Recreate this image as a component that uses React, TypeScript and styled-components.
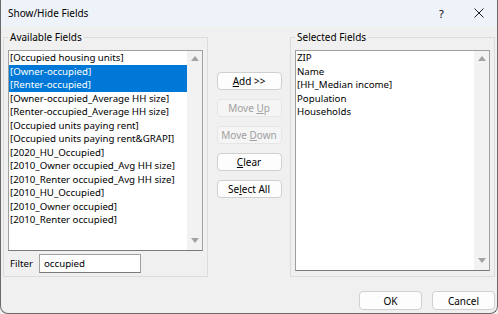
import React from 'react';
import styled, {createGlobalStyle} from 'styled-components';

const GlobalStyle = createGlobalStyle`
  html, body {
    margin: 0;
    padding: 0;
    background: #f0f0f0;
  }
  body {
    font-family: "Segoe UI", "Noto Sans", sans-serif;
  }
`;

const Window = styled.div`
  width: 498px;
  height: 314px;
  box-sizing: border-box;
  display: flex;
  flex-direction: column;
  background: #f0f0f0;
  border: 1px solid #6a6a6a;
  border-top: none;
  border-radius: 0 0 8px 8px;
  overflow: hidden;
  font-size: 9.7px;
  color: #000;
`;

const TitleBar = styled.div`
  height: 26px;
  flex: none;
  display: flex;
  align-items: center;
  padding-left: 7px;
  background: #eef2f9;
`;

const Title = styled.div`
  flex: 1;
  font-size: 10px;
`;

const TitleButton = styled.div`
  width: 37px;
  height: 26px;
  display: flex;
  align-items: center;
  justify-content: center;
  font-size: 11px;
`;

const Body = styled.div`
  display: grid;
  grid-template-columns: 205px 82px 205px;
  padding: 4px 2px 0 2px;
`;

const Group = styled.fieldset`
  margin: 0;
  padding: 6px 4px ${p => p.$bottom}px 4px;
  border: 1px solid #dcdcdc;
  min-width: 0;
  height: 247px;
  box-sizing: border-box;
  display: flex;
  flex-direction: column;
`;

const Legend = styled.legend`
  padding: 0 2px;
  font-size: 10px;
  line-height: 14px;
`;

const ListBox = styled.div`
  flex: ${p => p.$fill ? 1 : 'none'};
  height: ${p => p.$fill ? 'auto' : '201px'};
  box-sizing: border-box;
  display: flex;
  background: #fff;
  border: 1px solid #a0a0a0;
  border-bottom-color: #7a7a7a;
`;

const Items = styled.div`
  flex: 1;
  overflow: hidden;
`;

const Row = styled.div`
  height: 13.5px;
  line-height: 13.5px;
  padding-left: 1px;
  white-space: nowrap;
  background: ${p => p.$selected ? '#0078d7' : 'transparent'};
  color: ${p => p.$selected ? '#fff' : '#000'};
`;

const ScrollTrack = styled.div`
  width: 15px;
  background: #f2f2f2;
  display: flex;
  flex-direction: column;
  justify-content: space-between;
  align-items: center;
  padding: 5px 0 7px;
`;

const FilterRow = styled.div`
  display: flex;
  align-items: center;
  margin-top: 3px;
  padding-left: 2px;
  gap: 6px;
`;

const FilterInput = styled.div`
  width: 102px;
  height: 19px;
  box-sizing: border-box;
  background: #fff;
  border: 1px solid #a0a0a0;
  border-bottom-color: #7a7a7a;
  padding-left: 4px;
  line-height: 17px;
`;

const Middle = styled.div`
  display: flex;
  flex-direction: column;
  align-items: center;
  padding-top: 42px;
  gap: 9px;
`;

const Button = styled.div`
  width: 65px;
  height: 18px;
  box-sizing: border-box;
  display: flex;
  align-items: center;
  justify-content: center;
  border-radius: 4px;
  border: 1px solid ${p => p.$disabled ? '#e6e6e6' : '#d0d0d0'};
  background: ${p => p.$disabled ? '#f5f5f5' : '#fdfdfd'};
  color: ${p => p.$disabled ? '#a0a0a0' : '#000'};
  font-size: 10px;
  u {
    text-underline-offset: 1px;
  }
`;

const Footer = styled.div`
  display: flex;
  justify-content: flex-end;
  gap: 10px;
  margin-top: 14px;
  padding-right: 2px;
`;

const FooterButton = styled(Button)`
  width: 63px;
  height: 19px;
`;

const Arrow = ({up}: {up?: boolean}) => (
  <svg width="8" height="5" viewBox="0 0 8 5">
    <path d={up ? 'M0 5 L4 0 L8 5 Z' : 'M0 0 L8 0 L4 5 Z'} fill="#a3a3a3"/>
  </svg>
);

const available = [
  '[Occupied housing units]',
  '[Owner-occupied]',
  '[Renter-occupied]',
  '[Owner-occupied_Average HH size]',
  '[Renter-occupied_Average HH size]',
  '[Occupied units paying rent]',
  '[Occupied units paying rent&GRAPI]',
  '[2020_HU_Occupied]',
  '[2010_Owner occupied_Avg HH size]',
  '[2010_Renter occupied_Avg HH size]',
  '[2010_HU_Occupied]',
  '[2010_Owner occupied]',
  '[2010_Renter occupied]',
];

const selected = ['ZIP', 'Name', '[HH_Median income]', 'Population', 'Households'];

export default function App() {
  return (
    <>
      <GlobalStyle/>
      <Window>
        <TitleBar>
          <Title>Show/Hide Fields</Title>
          <TitleButton>?</TitleButton>
          <TitleButton>
            <svg width="10" height="10" viewBox="0 0 10 10">
              <path d="M0.5 0.5 L9.5 9.5 M9.5 0.5 L0.5 9.5" stroke="#222" strokeWidth="1"/>
            </svg>
          </TitleButton>
        </TitleBar>
        <Body>
          <Group $bottom={4}>
            <Legend>Available Fields</Legend>
            <ListBox>
              <Items>
                {available.map((name, i) =>
                  <Row key={name} $selected={i === 1 || i === 2}>{name}</Row>
                )}
              </Items>
              <ScrollTrack>
                <Arrow up/>
                <Arrow/>
              </ScrollTrack>
            </ListBox>
            <FilterRow>
              <span>Filter</span>
              <FilterInput>occupied</FilterInput>
            </FilterRow>
          </Group>
          <Middle>
            <Button><span><u>A</u>dd &gt;&gt;</span></Button>
            <Button $disabled><span>Move <u>U</u>p</span></Button>
            <Button $disabled><span>Move <u>D</u>own</span></Button>
            <Button><span><u>C</u>lear</span></Button>
            <Button><span>Se<u>l</u>ect All</span></Button>
          </Middle>
          <Group $bottom={5}>
            <Legend>Selected Fields</Legend>
            <ListBox $fill>
              <Items>
                {selected.map(name => <Row key={name}>{name}</Row>)}
              </Items>
              <ScrollTrack>
                <Arrow up/>
                <Arrow/>
              </ScrollTrack>
            </ListBox>
          </Group>
        </Body>
        <Footer>
          <FooterButton>OK</FooterButton>
          <FooterButton>Cancel</FooterButton>
        </Footer>
      </Window>
    </>
  );
}
